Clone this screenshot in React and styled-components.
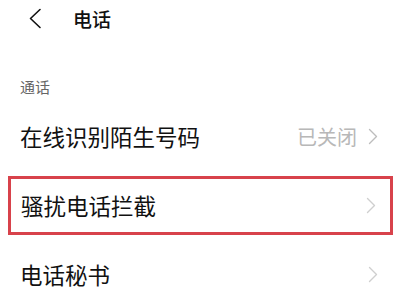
import React from 'react';
import styled, { createGlobalStyle } from 'styled-components';

const GlobalStyle = createGlobalStyle`
  html, body {
    margin: 0;
    padding: 0;
    background: #fff;
  }
  body {
    font-family: "Noto Sans CJK SC", "Noto Sans", sans-serif;
    color: #111;
  }
`;

const Page = styled.div`
  width: 400px;
  height: 300px;
  overflow: hidden;
  background: #fff;
`;

const Header = styled.header`
  display: flex;
  align-items: center;
  height: 36px;
  padding-left: 28px;
  gap: 31px;
`;

const Title = styled.h1`
  margin: 0;
  font-size: 19px;
  font-weight: 500;
  line-height: 1;
  color: #111;
`;

const SectionLabel = styled.div`
  margin-top: 41px;
  margin-bottom: 5px;
  padding-left: 20px;
  font-size: 15px;
  line-height: 20px;
  color: #666;
`;

const Row = styled.div`
  display: flex;
  align-items: center;
  justify-content: space-between;
  box-sizing: border-box;
  height: ${(p) => (p.$highlight ? '59px' : '69px')};
  margin: ${(p) => (p.$highlight ? '5px 7px 5px 8px' : '0')};
  padding: ${(p) => (p.$highlight ? '0 14px 0 10px' : '0 22px 0 20px')};
  border: ${(p) => (p.$highlight ? '3px solid #d8424b' : 'none')};
`;

const Label = styled.span`
  font-size: 22.5px;
  line-height: 1;
  color: #111;
`;

const Trail = styled.div`
  display: flex;
  align-items: center;
  gap: 11px;
`;

const Value = styled.span`
  font-size: 20px;
  line-height: 1;
  color: #b8b8b8;
`;

const BackIcon = () => (
  <svg width="14" height="21" viewBox="0 0 14 21" fill="none">
    <path d="M12 1.5 L2.5 10.5 L12 19.5" stroke="#111" strokeWidth="1.6" strokeLinecap="round" strokeLinejoin="round" />
  </svg>
);

const Chevron = ({ color = '#bdbdbd' }) => (
  <svg width="10" height="17" viewBox="0 0 10 17" fill="none">
    <path d="M1.5 1.5 L8.5 8.5 L1.5 15.5" stroke={color} strokeWidth="1.4" strokeLinecap="round" strokeLinejoin="round" />
  </svg>
);

const App = () => (
  <Page>
    <GlobalStyle />
    <Header>
      <BackIcon />
      <Title>电话</Title>
    </Header>
    <SectionLabel>通话</SectionLabel>
    <Row>
      <Label>在线识别陌生号码</Label>
      <Trail>
        <Value>已关闭</Value>
        <Chevron />
      </Trail>
    </Row>
    <Row $highlight>
      <Label>骚扰电话拦截</Label>
      <Trail>
        <Chevron color="#cfcfcf" />
      </Trail>
    </Row>
    <Row>
      <Label>电话秘书</Label>
      <Trail>
        <Chevron color="#cfcfcf" />
      </Trail>
    </Row>
  </Page>
);

export default App;
